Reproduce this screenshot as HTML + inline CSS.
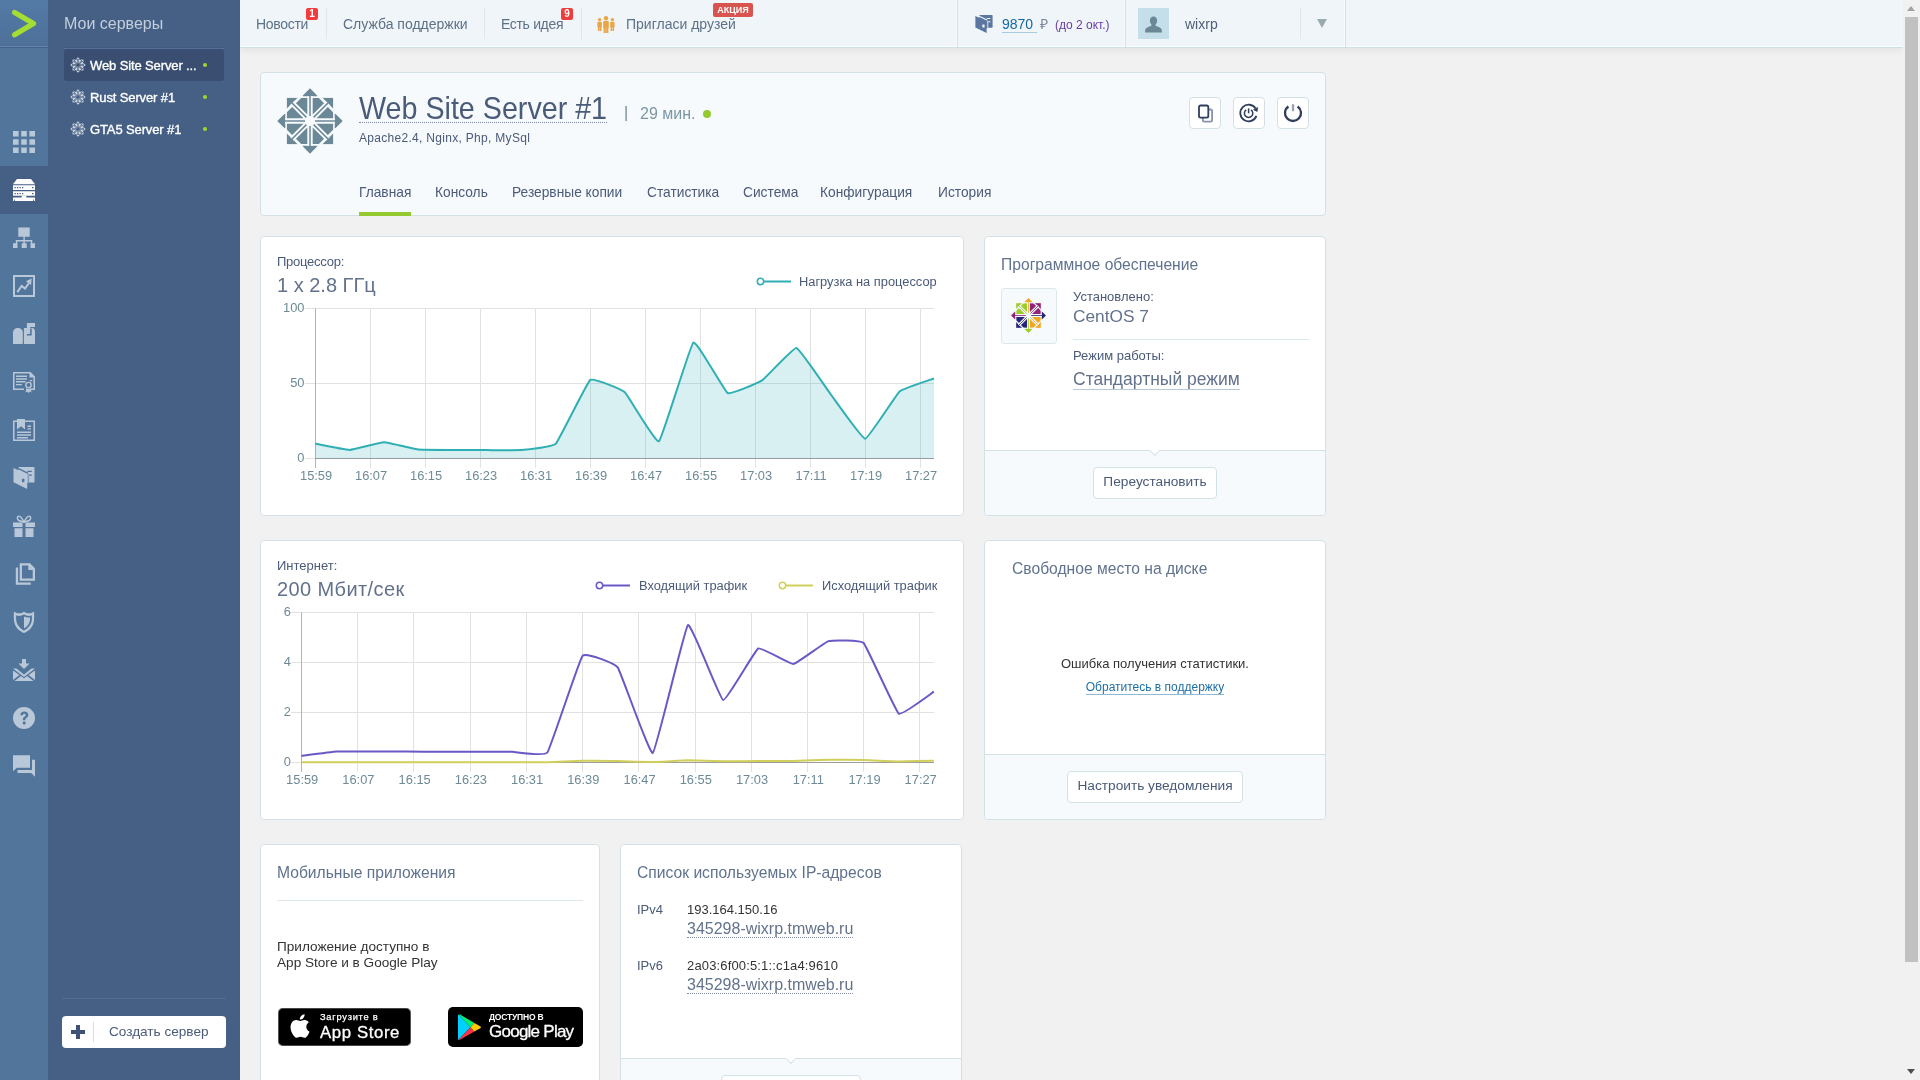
<!DOCTYPE html>
<html lang="ru">
<head>
<meta charset="utf-8">
<title>Web Site Server #1</title>
<style>
*{box-sizing:border-box;margin:0;padding:0}
html,body{width:1920px;height:1080px;overflow:hidden}
body{background:#f1f1f1;font-family:"Liberation Sans",sans-serif;font-size:13px;color:#4a5a78;position:relative;will-change:transform}
.abs{position:absolute}
.t{position:absolute;white-space:nowrap;line-height:1}
a{color:inherit;text-decoration:none}
/* top bar */
#topbar{position:absolute;left:240px;top:0;width:1663px;height:48px;background:#f0f5fa;border-bottom:1px solid #d0dfe5;box-shadow:inset 0 -1px 0 #fafdfe,0 2px 8px rgba(0,0,0,.07)}
.vsep{position:absolute;width:1px;background:#dde7ec;top:8px;height:31px}
.vsepf{position:absolute;width:1px;background:#d3e1e6;top:0;height:47px;box-shadow:-1px 0 0 #f9fcfe}
.nav{position:absolute;top:17px;font-size:14px;line-height:1;color:#5d7185;white-space:nowrap}
.badge{position:absolute;top:8px;width:12px;height:12px;border-radius:2px;background:#f23c3c;color:#fff;font-size:10px;font-weight:bold;line-height:12px;text-align:center}
/* sidebars */
#sb1{position:absolute;left:0;top:0;width:48px;height:1080px;background:#52759b}
#logo{position:absolute;left:0;top:0;width:48px;height:48px;background:linear-gradient(#537aa6,#4d7098);border-bottom:1px solid #44618a;box-shadow:inset 0 -1px 0 #6383ab}
.ic{position:absolute;left:0;width:48px;height:48px}
.ic svg{position:absolute;left:13px;top:13px;width:22px;height:22px;fill:#b9c8d9}
.ic.on{background:#455f85}
.ic.on svg{fill:#fff}
#sb2{position:absolute;left:48px;top:0;width:192px;height:1080px;background:#455f85}
.srv{position:absolute;left:16px;width:160px;height:32px;border-radius:3px;color:#fff;font-size:13px;-webkit-text-stroke:.35px #fff;line-height:32px;white-space:nowrap}
.srv.on{background:#394e70}
.srv span{position:absolute;left:26px;top:1px;letter-spacing:-.12px}
.srv i{position:absolute;left:139px;top:14px;width:4px;height:4px;border-radius:2px;background:#a2d42b}
.srv svg{position:absolute;left:6px;top:8px;width:16px;height:16px}
/* cards */
.card{position:absolute;background:#fff;border:1px solid #d3e1e6;border-radius:4px}
.foot{position:absolute;left:0;right:0;bottom:0;height:65px;background:#f7fafc;border-top:1px solid #d3e1e6;border-radius:0 0 3px 3px}
.notch{position:absolute;left:50%;top:-1px;width:7.500px;height:7.500px;margin-left:-3.750px;background:#fff;border-right:1px solid #d3e1e6;border-bottom:1px solid #d3e1e6;transform:translateY(-3.750px) rotate(45deg)}
.btn{position:absolute;height:32px;background:#fff;border:1px solid #d3e1e6;border-radius:4px;font-size:13.700px;line-height:28px;text-align:center;color:#4a5a78;white-space:nowrap}
.h{position:absolute;white-space:nowrap;line-height:1;font-size:15.650px;color:#60728e;margin-top:1px}
.lbl{position:absolute;white-space:nowrap;line-height:1;font-size:13px;color:#4a5a78}
.big{position:absolute;white-space:nowrap;line-height:1;font-size:20px;color:#63728c}
.tab{position:absolute;top:113px;font-size:13.750px;line-height:1;color:#4a5a78;white-space:nowrap}
svg text{font-family:"Liberation Sans",sans-serif}
</style>
</head>
<body>
<svg width="0" height="0" style="position:absolute">
<defs>
<mask id="cm" maskUnits="userSpaceOnUse" x="-34" y="-34" width="68" height="68">
<rect x="-34" y="-34" width="68" height="68" fill="#fff"/>
<g stroke="#000" fill="none">
<path d="M0-24.700V24.700M-24.700 0H24.700M-17.900-17.900 17.900 17.900M-17.900 17.900 17.900-17.900" stroke-width="5.400"/>
<path d="M-10-23.900H10M-10 23.900H10M-23.900-10V10M23.900-10V10" stroke-width="1.600"/>
<path d="M26 7.750 7.750 26M-26 7.750-7.750 26M26-7.750 7.750-26M-26-7.750-7.750-26" stroke-width="2.500"/>
</g>
<circle r="4.600" fill="#000"/>
<path d="M0-5V-26M0 5V26M-5 0H-26M5 0H26M3.600 3.600 19 19M-3.600 3.600-19 19M3.600-3.600 19-19M-3.600-3.600-19-19" stroke="#fff" stroke-width="1.500" fill="none"/>
</mask>
<g id="cent" fill="currentColor" mask="url(#cm)">
<rect x="-23.100" y="-23.100" width="46.200" height="46.200"/>
<path d="M0-32.700 9.600-23.100H-9.600zM0 32.700 9.600 23.100H-9.600zM-32.700 0-23.100 9.600V-9.600zM32.700 0 23.100 9.600V-9.600z"/>
</g>
</defs>
</svg>

<!-- ===== top bar ===== -->
<div id="topbar">
  <a class="nav" id="n1" style="left:16px;letter-spacing:-.3px">Новости</a>
  <span class="badge" style="left:66px">1</span>
  <div class="vsep" style="left:86px"></div>
  <a class="nav" id="n2" style="left:103px">Служба поддержки</a>
  <div class="vsep" style="left:244px"></div>
  <a class="nav" id="n3" style="left:261px;letter-spacing:-.33px">Есть идея</a>
  <span class="badge" style="left:321px">9</span>
  <div class="vsep" style="left:341px"></div>
  <svg class="abs" style="left:357px;top:16px" width="18" height="17" viewBox="0 0 18 17"><g fill="#eaa548"><circle cx="9" cy="2.2" r="2.2"/><rect x="6.2" y="5" width="5.6" height="7" rx="1"/><rect x="6.6" y="11" width="2.2" height="6"/><rect x="9.2" y="11" width="2.2" height="6"/><circle cx="2.6" cy="3.6" r="1.7"/><rect x="0.4" y="5.8" width="4.4" height="5.4" rx=".8"/><rect x="0.9" y="10.4" width="1.6" height="4.6"/><rect x="2.8" y="10.4" width="1.6" height="4.6"/><circle cx="15.4" cy="3.6" r="1.7"/><rect x="13.2" y="5.8" width="4.4" height="5.4" rx=".8"/><rect x="13.6" y="10.4" width="1.6" height="4.6"/><rect x="15.5" y="10.4" width="1.6" height="4.6"/></g></svg>
  <a class="nav" id="n4" style="left:386px">Пригласи друзей</a>
  <span class="abs" id="akc" style="left:473px;top:3px;width:40px;height:14px;border-radius:2px;background:#d9534f;color:#fff;font-size:9px;font-weight:bold;line-height:14px;text-align:center">АКЦИЯ</span>
  <div class="vsepf" style="left:717px"></div>
  <svg class="abs" style="left:734.500px;top:15px" width="18" height="18" viewBox="0 0 18 18"><rect x="4.300" y=".1" width="13.300" height="12.600" rx=".7" fill="#5b76a1"/><path d="M1.200-.3 12.400 5.200" stroke="#f0f5fa" stroke-width="1.100" fill="none"/><path d="M11.800 3.100h3.600v1h-3.600zM12.500 6.200h2.900v1h-2.900z" fill="#f0f5fa"/><path d="M11.800 6.200h1.600v6.500h-1.600z" fill="#b7c4d8"/><path fill-rule="evenodd" fill="#5b76a1" d="M.4.900 11.800 6.200 11.600 17.900.4 12.500z"/><rect x="7.300" y="9.600" width="2.300" height="2.900" rx=".5" fill="#f0f5fa"/></svg>
  <a class="nav" id="bal" style="left:762px;color:#1369a3;border-bottom:1px solid #a9cbe0;padding-bottom:1px">9870&nbsp;</a>
  <span class="nav" id="rub" style="left:800px;color:#7b8794">₽</span>
  <span class="nav" id="till" style="left:815px;top:19px;font-size:12px;color:#6a3ea1">(до 2 окт.)</span>
  <div class="vsepf" style="left:885px"></div>
  <div class="abs" style="left:898px;top:8px;width:31px;height:31px;background:#c4deea;overflow:hidden">
    <svg width="31" height="31" viewBox="0 0 31 31"><path fill="#6b8896" d="M15.5 8.5c2.3 0 3.6 1.7 3.6 4 0 1.6-.6 3-1.5 3.9v1.3c2.6.9 5.4 2.1 5.9 3.4.3.8.4 2.6.4 3.4H7.1c0-.8.1-2.6.4-3.4.5-1.3 3.3-2.5 5.9-3.4v-1.3c-.9-.9-1.5-2.3-1.5-3.9 0-2.3 1.300-4 3.600-4z"/></svg>
  </div>
  <span class="nav" id="usr" style="left:945px;color:#4f5f7a">wixrp</span>
  <div class="vsep" style="left:1060px"></div>
  <div class="abs" style="left:1077px;top:19px;width:0;height:0;border-left:5px solid transparent;border-right:5px solid transparent;border-top:9px solid #9aabb0"></div>
  <div class="vsepf" style="left:1105px"></div>
</div>

<!-- ===== scrollbar ===== -->
<div class="abs" style="left:1903px;top:0;width:17px;height:1080px;background:#f1f1f1">
  <div class="abs" style="left:2px;top:17px;width:13px;height:945px;background:#c1c1c1"></div>
  <div class="abs" style="left:4px;top:6px;width:0;height:0;border-left:4.5px solid transparent;border-right:4.5px solid transparent;border-bottom:5px solid #a3a3a3"></div>
  <div class="abs" style="left:4px;top:1069px;width:0;height:0;border-left:4.5px solid transparent;border-right:4.5px solid transparent;border-top:5px solid #505050"></div>
</div>

<!-- ===== sidebar 1 ===== -->
<div id="sb1">
  <div id="logo"><svg class="abs" style="left:12px;top:9px" width="25" height="30" viewBox="0 0 25 30"><path d="M2.6 3.4 21.5 14.6 2.6 25.8" fill="none" stroke="#a4de33" stroke-width="5.2" stroke-linecap="round" stroke-linejoin="round"/></svg></div>
  <div class="ic" style="top:118px"><svg viewBox="0 0 22 22"><path d="M0 0h5.6v5.6H0zM8.2 0h5.6v5.6H8.2zM16.4 0H22v5.6h-5.6zM0 8.2h5.6v5.6H0zM8.2 8.2h5.6v5.6H8.2zM16.4 8.2H22v5.6h-5.600zM0 16.400h5.600V22H0zM8.200 16.400h5.600V22H8.200zM16.400 16.400H22V22h-5.600z"/></svg></div>
  <div class="ic on" style="top:166px"><svg viewBox="0 0 22 22"><path d="M4 0h14l4 5.200H0z"/><path fill-rule="evenodd" d="M0 6.300h22v4.600H0zM1.500 8h1.300v1.300H1.500zM4 8h1.300v1.300H4zM6.500 8h1.300v1.300H6.500zM9 8h1.300v1.300H9zM19 8h1.500v1.300H19zM0 12.200h22v4.600H0zM1.500 13.900h1.300v1.300H1.500zM4 13.900h1.300v1.300H4zM6.500 13.900h1.300v1.300H6.500zM9 13.900h1.300v1.300H9zM19 13.900h1.500v1.300H19z"/><path d="M8.700 16.800h4.600v1.700h8.700V22h-1v-1.600h-.8V22H1.800v-1.600H1V22H0v-3.500h8.700z"/></svg></div>
  <div class="ic" style="top:214px"><svg viewBox="0 0 22 22"><path d="M5.300.5h11.400v9.200h-4.900v3.300h7.500v3.300H22V21h-4.500v-4.700h.4v-1.700h-6.100v1.700h1.900V21H8.700v-4.700h1.700v-1.700H4.300v1.700h.2V21H0v-4.700h2.800V13h7.600V9.700H5.300z"/></svg></div>
  <div class="ic" style="top:262px"><svg viewBox="0 0 22 22"><path fill-rule="evenodd" d="M0 0h22v22H0zM2 2v18h18V2z"/><path d="M4.300 17.200 8.700 10.900 12 13.500 16 8" fill="none" stroke="#b9c8d9" stroke-width="2.100"/><path d="M18.600 3.600 12.900 6.200 18.100 10z"/></svg></div>
  <div class="ic" style="top:310px"><svg viewBox="0 0 22 22"><path d="M0 10C0 7 2.100 5.100 4.900 5.100S9.800 7 9.800 10v10.300q0 .8-.8.800H.8q-.8 0-.8-.8z"/><path d="M10.900 5.100h3V0H22v4h-4.800v1.100H19q3 0 3 3.900v11.300q0 .8-.8.800h-9.500q-.8 0-.8-.8z"/><path d="M17.900 5.600v6.100h-4" fill="none" stroke="#52759b" stroke-width="1.600"/></svg></div>
  <div class="ic" style="top:358px"><svg viewBox="0 0 22 22"><path fill-rule="evenodd" d="M0 1h17.500L22 5.500V19h-5v-1.500h3.500V6.500h-4v-4h-15v15h9.500V19H0z"/><path d="M3 4.500h11v1.400H3zM3 7.300h11v1.400H3zM3 10.100h9.500v1.400H3zM3 12.900h6v1.400H3zM16.800 9h2.500v1.200h-2.500z"/><path fill-rule="evenodd" d="M15.500 10.700a3.400 3.400 0 1 1 0 6.800 3.400 3.400 0 0 1 0-6.800zm0 1.400a2 2 0 1 0 0 4 2 2 0 0 0 0-4z"/><path d="M13.300 17.200l-.8 4.300 1.600-1 1.400 1.500 1.400-1.500 1.600 1-.8-4.300-1 .7h-2.400z"/></svg></div>
  <div class="ic" style="top:406px"><svg viewBox="0 0 22 22"><path fill-rule="evenodd" d="M0 1.500h4V0h8v1.500h10V22H0zM1.500 3v17.500h19V3H12v7.500l-4-3.300-4 3.300V3z"/><path d="M4 12.500h14v1.500H4zM4 15.200h14v1.500H4zM4 17.900h11v1.500H4zM14.500 6.500h3.500v1.400h-3.500zM14.500 9.200h3.500v1.400h-3.500z"/></svg></div>
  <div class="ic" style="top:454px"><svg viewBox="0 0 18 18"><rect x="4.300" y=".1" width="13.300" height="12.600" rx=".7"/><path d="M1.200-.3 12.400 5.200" stroke="#52759b" stroke-width="1.100" fill="none"/><path d="M11.800 3.100h3.600v1h-3.600zM12.500 6.200h2.900v1h-2.900z" fill="#52759b"/><path d="M11.800 6.200h1.400v6.500h-1.400z" fill="#7f9ab8"/><path d="M.4.900 11.800 6.200 11.600 17.900.4 12.500z"/><rect x="7.300" y="9.600" width="2" height="2.900" rx=".6" fill="#52759b"/></svg></div>
  <div class="ic" style="top:502px"><svg viewBox="0 0 22 22"><path d="M0 7.500h9.500V12H0zM12.500 7.500H22V12h-9.500zM1.500 13.300h8V22h-8zM12.500 13.300h8V22h-8z"/><path fill="none" stroke="#b9c8d9" stroke-width="1.500" d="M10.800 7C9.500 4 8 1 5.800 1.200 3.800 1.400 3.800 4.500 5.800 5.500 7.500 6.400 9.500 6.800 10.800 7zM11.200 7C12.500 4 14 1 16.200 1.200c2 .2 2 3.300 0 4.300C14.500 6.400 12.500 6.800 11.200 7z"/></svg></div>
  <div class="ic" style="top:550px"><svg viewBox="0 0 22 22"><path fill-rule="evenodd" d="M6.700.3H17L22 5.300v12.500H6.700zM9 2.600v12.900h10.700V7h-4.400V2.600z"/><path d="M2.800 4.500h2.300v14.900h12.700v2.300H2.800z"/></svg></div>
  <div class="ic" style="top:598px"><svg viewBox="0 0 22 22"><path fill-rule="evenodd" d="M1 .5C3.500 2.800 7.500 3 11 .8c3.500 2.200 7.500 2 10-.3 0 0 .5 4.500 0 9C20.300 16 16 20 11 22 6 20 1.700 16 1 9.500.5 5 1 .5 1 .5zM3.200 4.300c-.2 1.700-.2 3.500 0 5C3.800 14 7 17.500 11 19.500c4-2 7.200-5.500 7.800-10.200.2-1.500.2-3.300 0-5C16.500 5.500 13.500 5 11 3.500 8.500 5 5.500 5.500 3.200 4.300z"/><path d="M11 5.500c2 1 4 1.300 6 .8 0 1 0 2.200-.1 3.200-.5 3.500-2.900 6.300-5.900 8z"/></svg></div>
  <div class="ic" style="top:646px"><svg viewBox="0 0 22 22"><path d="M9 0h4v4.500h3.500L11 10 5.500 4.500H9z"/><path d="M0 9.500 3.500 9.500 11 15.500 18.500 9.500H22L11 18z"/><path d="M0 11.500 6.500 16 0 21zM22 11.500 15.500 16 22 21zM1.500 22 8 17l3 2.300 3-2.300 6.500 5z"/></svg></div>
  <div class="ic" style="top:694px"><svg viewBox="0 0 22 22"><path fill-rule="evenodd" d="M11 0a11 11 0 1 1 0 22 11 11 0 0 1 0-22zM7.300 8.200h2.500c.1-1 .7-1.500 1.500-1.500.9 0 1.400.5 1.400 1.200 0 .8-.5 1.200-1.300 1.800-1 .8-1.500 1.500-1.500 3v.5h2.400v-.4c0-.8.400-1.200 1.200-1.800 1-.8 1.800-1.600 1.800-3.200 0-2-1.600-3.300-3.900-3.300-2.500 0-4 1.400-4.100 3.700zM11.200 14.600c-.9 0-1.600.7-1.600 1.500 0 .9.700 1.500 1.600 1.500s1.600-.6 1.600-1.500c0-.8-.7-1.500-1.600-1.500z"/></svg></div>
  <div class="ic" style="top:742px"><svg viewBox="0 0 22 22"><path d="M0 .2h17v12.500H3.800L0 16.300z"/><path d="M19 4.700h3v17l-3.800-3.700H4.500v-3H19z"/></svg></div>
</div>

<!-- ===== sidebar 2 ===== -->
<div id="sb2">
  <div class="t" id="mys" style="left:16px;top:16px;font-size:16px;color:#c3cfdc">Мои серверы</div>
  <div class="abs" style="left:16px;top:47px;width:160px;height:1px;background:#3f5a80"></div><div class="abs" style="left:16px;top:48px;width:160px;height:1px;background:#56709a"></div>
  <div class="srv on" style="top:49px"><svg viewBox="-34 -34 68 68"><use href="#cent" color="#c9d3df"/></svg><span id="s1">Web Site Server ...</span><i></i></div>
  <div class="srv" style="top:81px"><svg viewBox="-34 -34 68 68"><use href="#cent" color="#c9d3df"/></svg><span id="s2">Rust Server #1</span><i></i></div>
  <div class="srv" style="top:113px"><svg viewBox="-34 -34 68 68"><use href="#cent" color="#c9d3df"/></svg><span id="s3">GTA5 Server #1</span><i></i></div>
  <div class="abs" style="left:14px;top:998px;width:164px;height:1px;background:#526b90"></div>
  <div class="abs" style="left:14px;top:1016px;width:164px;height:32px;background:#fff;border-radius:4px">
    <div class="abs" style="left:9px;top:14px;width:14px;height:4px;background:#3d5274"></div>
    <div class="abs" style="left:14px;top:9px;width:4px;height:14px;background:#3d5274"></div>
    <div class="abs" style="left:31px;top:6px;width:1px;height:20px;background:#d3e1e6"></div>
    <span class="t" id="crt" style="left:47px;top:9px;font-size:13.600px;color:#4a5a78">Создать сервер</span>
  </div>
</div>

<!-- ===== header card ===== -->
<div class="card" style="left:260px;top:72px;width:1066px;height:144px;background:#f7fafc">
  <svg class="abs" style="left:15.500px;top:15px" width="66" height="66" viewBox="-33 -33 66 66"><use href="#cent" color="#6b8896"/></svg>
  <div class="t" id="ttl" style="left:98px;top:20px;font-size:30.500px;transform-origin:0 0;transform:scaleX(.94);color:#4a5b79">Web Site Server #1</div>
  <div class="abs" style="left:98px;top:49px;width:248px;height:0;border-top:1px dotted #7d8ba3"></div>
  <div class="t" id="bar" style="left:363px;top:32px;font-size:16px;color:#6d8a96">|</div>
  <div class="t" id="upt" style="left:379px;top:33px;font-size:16px;color:#7b97a3">29 мин.</div>
  <div class="abs" style="left:442px;top:37px;width:8px;height:8px;border-radius:4px;background:#94c92f"></div>
  <div class="t" id="sub" style="left:98px;top:59px;font-size:12px;letter-spacing:.3px;color:#4a5a78">Apache2.4, Nginx, Php, MySql</div>
  <a class="tab" id="t1" style="left:98px">Главная</a>
  <a class="tab" id="t2" style="left:174px">Консоль</a>
  <a class="tab" id="t3" style="left:251px">Резервные копии</a>
  <a class="tab" id="t4" style="left:386px">Статистика</a>
  <a class="tab" id="t5" style="left:482px">Система</a>
  <a class="tab" id="t6" style="left:559px">Конфигурация</a>
  <a class="tab" id="t7" style="left:677px">История</a>
  <div class="abs" style="left:98px;top:139px;width:52px;height:4px;background:#94c92f"></div>
  <div class="btn" style="left:928px;top:24px;width:32px"><svg class="abs" style="left:0;top:0" width="30" height="30" viewBox="0 0 30 30"><rect x="12.800" y="11.500" width="9.300" height="12.200" rx="1.600" fill="none" stroke="#8b93a8" stroke-width="1.800"/><rect x="9" y="7.500" width="9.300" height="12.200" rx="1.600" fill="#fff" stroke="#2f3f5c" stroke-width="1.800"/></svg></div>
  <div class="btn" style="left:972px;top:24px;width:32px"><svg class="abs" style="left:0;top:0" width="30" height="30" viewBox="0 0 30 30"><path d="M22.40 17.84A8.3 8.3 0 1 1 21.64 10.60" fill="none" stroke="#2f3f5c" stroke-width="1.800"/><path d="M23.42 14.06 24.10 9.00 18.93 11.63z" fill="#2f3f5c"/><path d="M17.01 11.86A4.200 4.200 0 1 1 12.19 11.86" fill="none" stroke="#2f3f5c" stroke-width="1.500"/><path d="M14.600 10.400v4.900" stroke="#2f3f5c" stroke-width="1.500"/></svg></div>
  <div class="btn" style="left:1016px;top:24px;width:32px"><svg class="abs" style="left:0;top:0" width="30" height="30" viewBox="0 0 30 30"><path d="M19.59 8.45A8 8 0 1 1 10.41 8.45" fill="none" stroke="#2f3f5c" stroke-width="2.300"/><path d="M15 6.200v7" stroke="#9a9fb2" stroke-width="2.300"/></svg></div>
</div>

<!-- ===== CPU card ===== -->
<div class="card" style="left:260px;top:236px;width:704px;height:280px">
  <div class="lbl" id="c1" style="left:16px;top:18px;letter-spacing:-.25px">Процессор:</div>
  <div class="big" id="c2" style="left:16px;top:38px">1 x 2.8 ГГц</div>
  <!--CPUCHART-->

<svg class="abs" style="left:0;top:0" width="702" height="278" viewBox="0 0 702 278">
<path d="M54.5 71.5V230.9M109.5 71.5V230.9M164.5 71.5V230.9M219.5 71.5V230.9M274.5 71.5V230.9M329.5 71.5V230.9M384.5 71.5V230.9M439.5 71.5V230.9M494.5 71.5V230.9M549.5 71.5V230.9M604.5 71.5V230.9M659.5 71.5V230.9M43.8 71.5H673.0M43.8 146.5H673.0M43.8 221.5H673.0" stroke="#e2e2e2" stroke-width="1" fill="none"/>
<path d="M54.5 71.5V230.9" stroke="#b3b3b3" stroke-width="1" fill="none"/>
<path d="M54.5 221.5H673.0" stroke="#9c9c9c" stroke-width="1" fill="none"/>
<path d="M54.3 206.6C55.8 206.9 85.6 213.0 88.7 212.9C91.8 212.8 119.9 205.3 123.0 205.3C126.1 205.3 154.3 212.2 157.4 212.5C160.5 212.8 188.7 212.9 191.8 212.9C194.9 212.9 223.1 213.1 226.1 213.1C229.2 213.1 257.4 213.4 260.5 213.1C263.6 212.8 291.8 209.8 294.9 206.6C298.0 203.4 326.2 145.2 329.3 142.9C332.4 140.6 360.5 152.3 363.6 155.1C366.7 157.9 394.9 206.5 398.0 204.3C401.1 202.1 429.3 107.7 432.4 105.5C435.5 103.3 463.6 154.4 466.7 156.1C469.8 157.8 498.0 145.4 501.1 143.4C504.2 141.4 532.4 110.4 535.5 111.0C538.6 111.6 566.8 153.4 569.8 157.5C572.9 161.6 601.1 201.9 604.2 201.8C607.3 201.7 635.5 157.2 638.6 154.5C641.7 151.8 671.4 142.1 673.0 141.5L673.0 221.4L54.3 221.4Z" fill="rgba(46,175,179,.19)"/>
<path d="M54.3 206.6C55.8 206.9 85.6 213.0 88.7 212.9C91.8 212.8 119.9 205.3 123.0 205.3C126.1 205.3 154.3 212.2 157.4 212.5C160.5 212.8 188.7 212.9 191.8 212.9C194.9 212.9 223.1 213.1 226.1 213.1C229.2 213.1 257.4 213.4 260.5 213.1C263.6 212.8 291.8 209.8 294.9 206.6C298.0 203.4 326.2 145.2 329.3 142.9C332.4 140.6 360.5 152.3 363.6 155.1C366.7 157.9 394.9 206.5 398.0 204.3C401.1 202.1 429.3 107.7 432.4 105.5C435.5 103.3 463.6 154.4 466.7 156.1C469.8 157.8 498.0 145.4 501.1 143.4C504.2 141.4 532.4 110.4 535.5 111.0C538.6 111.6 566.8 153.4 569.8 157.5C572.9 161.6 601.1 201.9 604.2 201.8C607.3 201.7 635.5 157.2 638.6 154.5C641.7 151.8 671.4 142.1 673.0 141.5" fill="none" stroke="#2eafb3" stroke-width="2" stroke-linejoin="round"/>
<g font-size="12.850" fill="#6d8a96">
<text x="43.5" y="75.2" text-anchor="end">100</text>
<text x="43.5" y="150.1" text-anchor="end">50</text>
<text x="43.5" y="225.1" text-anchor="end">0</text>
<text x="55.1" y="243.4" text-anchor="middle">15:59</text>
<text x="110.1" y="243.4" text-anchor="middle">16:07</text>
<text x="165.1" y="243.4" text-anchor="middle">16:15</text>
<text x="220.1" y="243.4" text-anchor="middle">16:23</text>
<text x="275.1" y="243.4" text-anchor="middle">16:31</text>
<text x="330.1" y="243.4" text-anchor="middle">16:39</text>
<text x="385.1" y="243.4" text-anchor="middle">16:47</text>
<text x="440.1" y="243.4" text-anchor="middle">16:55</text>
<text x="495.1" y="243.4" text-anchor="middle">17:03</text>
<text x="550.1" y="243.4" text-anchor="middle">17:11</text>
<text x="605.1" y="243.4" text-anchor="middle">17:19</text>
<text x="660.1" y="243.4" text-anchor="middle">17:27</text>
</g>
<path d="M500 44.500H530" stroke="#2eafb3" stroke-width="2"/><circle cx="499.500" cy="44.500" r="3.200" fill="#fff" stroke="#2eafb3" stroke-width="1.500"/><text id="lg1" x="538" y="49" font-size="12.850" fill="#4a5a78">Нагрузка на процессор</text>
</svg>
<!--/CPUCHART-->
</div>

<!-- ===== software card ===== -->
<div class="card" style="left:984px;top:236px;width:342px;height:280px">
  <div class="h" id="h1" style="left:16px;top:19px">Программное обеспечение</div>
  <div class="abs" style="left:16px;top:51px;width:56px;height:56px;border:1px solid #dde8ed;border-radius:3px;background:#f7fafc">
    <!--CENTCOLOR-->
    <svg class="abs" style="left:8.200px;top:8px" width="37" height="37" viewBox="-34.700 -34.700 69.400 69.400"><g mask="url(#cm)">
      <rect x="-23.100" y="-23.100" width="23.100" height="23.100" fill="#9ccd2a"/><rect x="0" y="-23.100" width="23.100" height="23.100" fill="#932279"/><rect x="0" y="0" width="23.100" height="23.100" fill="#efa724"/><rect x="-23.100" y="0" width="23.100" height="23.100" fill="#262577"/>
      <path d="M0-32.700 8.500-24.200H-8.500z" fill="#efa724"/><path d="M0 32.700 8.500 24.200H-8.500z" fill="#9ccd2a"/><path d="M-32.700 0-24.200 8.500V-8.500z" fill="#932279"/><path d="M32.700 0 24.200 8.500V-8.500z" fill="#262577"/>
      <path d="M0-4V-26" stroke="#efa724" stroke-width="3"/><path d="M0 4V26" stroke="#9ccd2a" stroke-width="3"/><path d="M-4 0H-26" stroke="#932279" stroke-width="3"/><path d="M4 0H26" stroke="#262577" stroke-width="3"/>
    </g></svg>
    <!--/CENTCOLOR-->
  </div>
  <div class="lbl" id="w1" style="left:88px;top:53px">Установлено:</div>
  <div class="t" id="w2" style="left:88px;top:71px;font-size:17.300px;color:#63728c">CentOS 7</div>
  <div class="abs" style="left:88px;top:102px;width:236px;height:1px;background:#dde8ed"></div>
  <div class="lbl" id="w3" style="left:88px;top:112px">Режим работы:</div>
  <div class="t" id="w4" style="left:88px;top:134px;font-size:17.500px;color:#63728c;padding-bottom:0;border-bottom:1px solid #b9c9d6">Стандартный режим</div>
  <div class="foot"><div class="notch"></div><div class="btn" id="b1" style="left:108px;top:16px;width:124px">Переустановить</div></div>
</div>

<!-- ===== network card ===== -->
<div class="card" style="left:260px;top:540px;width:704px;height:280px">
  <div class="lbl" id="i1" style="left:16px;top:18px">Интернет:</div>
  <div class="big" id="i2" style="left:16px;top:38px;letter-spacing:.4px">200 Мбит/сек</div>
  <!--NETCHART-->
<svg class="abs" style="left:0;top:0" width="702" height="278" viewBox="0 0 702 278">
<path d="M40.5 71.5V230.9M96.5 71.5V230.9M152.5 71.5V230.9M209.5 71.5V230.9M265.5 71.5V230.9M321.5 71.5V230.9M377.5 71.5V230.9M434.5 71.5V230.9M490.5 71.5V230.9M546.5 71.5V230.9M602.5 71.5V230.9M658.5 71.5V230.9M29.9 71.5H673.0M29.9 121.5H673.0M29.9 171.5H673.0M29.9 221.5H673.0" stroke="#e2e2e2" stroke-width="1" fill="none"/>
<path d="M40.5 71.5V230.9" stroke="#b3b3b3" stroke-width="1" fill="none"/>
<path d="M40.5 221.5H673.0" stroke="#9c9c9c" stroke-width="1" fill="none"/>
<path d="M40.4 215.0C42.0 214.8 72.4 210.8 75.5 210.6C78.7 210.4 107.5 210.6 110.7 210.6C113.8 210.6 142.7 210.6 145.8 210.6C149.0 210.6 177.8 210.8 181.0 210.8C184.1 210.8 212.9 210.8 216.1 210.8C219.3 210.8 248.1 210.8 251.2 210.8C254.4 210.8 283.2 215.8 286.4 211.5C289.5 207.2 318.4 118.7 321.5 114.9C324.7 111.1 353.5 122.0 356.7 126.4C359.8 130.8 388.6 213.8 391.8 211.9C395.0 210.0 423.8 86.5 426.9 84.1C430.1 81.7 458.9 157.9 462.1 159.0C465.2 160.1 494.1 109.1 497.2 107.5C500.4 105.9 529.2 123.3 532.4 123.0C535.5 122.7 564.3 101.0 567.5 100.1C570.7 99.2 599.5 98.7 602.6 102.0C605.8 105.3 634.6 170.4 637.8 172.6C640.9 174.8 671.3 151.7 672.9 150.7" fill="none" stroke="#6a58c6" stroke-width="2" stroke-linejoin="round"/>
<path d="M40.4 221.3C42.0 221.3 72.4 221.3 75.5 221.3C78.7 221.3 107.5 221.3 110.7 221.3C113.8 221.3 142.7 221.3 145.8 221.3C149.0 221.3 177.8 221.3 181.0 221.3C184.1 221.3 212.9 221.3 216.1 221.3C219.3 221.3 248.1 221.3 251.2 221.3C254.4 221.3 283.2 221.4 286.4 221.3C289.5 221.2 318.4 219.9 321.5 219.8C324.7 219.7 353.5 220.0 356.7 220.1C359.8 220.2 388.6 221.1 391.8 221.1C395.0 221.1 423.8 219.3 426.9 219.3C430.1 219.3 458.9 220.3 462.1 220.3C465.2 220.3 494.1 220.0 497.2 220.0C500.4 220.0 529.2 220.1 532.4 220.0C535.5 219.9 564.3 218.8 567.5 218.8C570.7 218.8 599.5 218.9 602.6 219.0C605.8 219.1 634.6 220.4 637.8 220.4C640.9 220.4 671.3 219.7 672.9 219.7" fill="none" stroke="#d1cf5b" stroke-width="2" stroke-linejoin="round"/>
<g font-size="12.850" fill="#6d8a96">
<text x="30.0" y="75.2" text-anchor="end">6</text>
<text x="30.0" y="125.2" text-anchor="end">4</text>
<text x="30.0" y="175.1" text-anchor="end">2</text>
<text x="30.0" y="225.1" text-anchor="end">0</text>
<text x="41.2" y="243.4" text-anchor="middle">15:59</text>
<text x="97.4" y="243.4" text-anchor="middle">16:07</text>
<text x="153.7" y="243.4" text-anchor="middle">16:15</text>
<text x="209.9" y="243.4" text-anchor="middle">16:23</text>
<text x="266.1" y="243.4" text-anchor="middle">16:31</text>
<text x="322.3" y="243.4" text-anchor="middle">16:39</text>
<text x="378.6" y="243.4" text-anchor="middle">16:47</text>
<text x="434.8" y="243.4" text-anchor="middle">16:55</text>
<text x="491.0" y="243.4" text-anchor="middle">17:03</text>
<text x="547.3" y="243.4" text-anchor="middle">17:11</text>
<text x="603.5" y="243.4" text-anchor="middle">17:19</text>
<text x="659.7" y="243.4" text-anchor="middle">17:27</text>
</g>
<path d="M339 44.500H369" stroke="#6a58c6" stroke-width="2"/><circle cx="338.500" cy="44.500" r="3.200" fill="#fff" stroke="#6a58c6" stroke-width="1.500"/><text id="lg2" x="378" y="49" font-size="12.850" fill="#4a5a78">Входящий трафик</text><path d="M522 44.500H552" stroke="#d1cf5b" stroke-width="2"/><circle cx="521.500" cy="44.500" r="3.200" fill="#fff" stroke="#d1cf5b" stroke-width="1.500"/><text id="lg3" x="561" y="49" font-size="12.850" fill="#4a5a78">Исходящий трафик</text>
</svg>
<!--/NETCHART-->
</div>

<!-- ===== disk card ===== -->
<div class="card" style="left:984px;top:540px;width:342px;height:280px">
  <div class="h" id="h2" style="left:27px;top:19px">Свободное место на диске</div>
  <div class="t" id="d1" style="left:0;width:340px;text-align:center;top:116px;font-size:13px;color:#333">Ошибка получения статистики.</div>
  <div class="t" id="d2w" style="left:0;width:340px;text-align:center;top:140px;font-size:12px;color:#1d6fa5"><span id="d2" style="display:inline-block;line-height:13px;height:14px;box-sizing:border-box;border-bottom:1px solid #8fbad6">Обратитесь в поддержку</span></div>
  <div class="foot"><div class="btn" id="b2" style="left:82px;top:16px;width:176px">Настроить уведомления</div></div>
</div>

<!-- ===== mobile card ===== -->
<div class="card" style="left:260px;top:844px;width:340px;height:260px">
  <div class="h" id="h3" style="left:16px;top:19px">Мобильные приложения</div>
  <div class="abs" style="left:16px;top:55px;width:306px;height:1px;background:#dde8ed"></div>
  <div class="t" id="m1" style="left:16px;top:94px;font-size:13.600px;line-height:16px;color:#333;white-space:pre">Приложение доступно в
App Store и в Google Play</div>
  <!--BADGES-->
  <div class="abs" style="left:16.800px;top:162.600px;width:133.400px;height:38.500px;background:#000;box-shadow:inset 0 0 0 .6px #8a8a8a;border-radius:5px;overflow:hidden">
    <svg class="abs" style="left:11.700px;top:5.300px" width="21.300" height="26" viewBox="0 0 23 28"><path fill="#fff" d="M18.700 14.800c0-3.200 2.600-4.700 2.700-4.800-1.500-2.200-3.800-2.500-4.600-2.500-1.900-.2-3.800 1.200-4.800 1.200s-2.500-1.100-4.100-1.100c-2.100 0-4.100 1.300-5.200 3.200-2.200 3.900-.6 9.600 1.600 12.700 1.100 1.500 2.300 3.300 4 3.200 1.600-.1 2.200-1 4.100-1s2.500 1 4.200 1c1.700 0 2.800-1.500 3.900-3.100 1.200-1.800 1.700-3.500 1.700-3.600-.1 0-3.500-1.300-3.500-5.200zM15.500 5.300c.9-1.100 1.500-2.600 1.300-4.100-1.300.1-2.900.9-3.800 2-.8.900-1.500 2.500-1.300 3.900 1.400.1 2.900-.7 3.800-1.800z"/></svg>
    <span class="t" id="as1" style="left:42.200px;top:5.400px;font-size:9.300px;letter-spacing:.75px;color:#fff;-webkit-text-stroke:.25px #fff">Загрузите в</span>
    <span class="t" id="as2" style="left:42.200px;top:17.400px;font-size:16.800px;letter-spacing:.6px;color:#fff;-webkit-text-stroke:.3px #fff">App Store</span>
  </div>
  <div class="abs" style="left:187px;top:162px;width:135px;height:40px;background:#000;border-radius:5px;overflow:hidden">
    <svg class="abs" style="left:9.500px;top:7px" width="24" height="27" viewBox="0 0 24 27"><path d="M.6.600 12.500 13.200.6 25.800C.2 25.600 0 25.100 0 24.400V2C0 1.300.2.800.6.600z" fill="#00d0ff"/><path d="M.6.600C1.100.3 1.700.4 2.400.8L16.400 8.900 12.500 13.200z" fill="#00f076"/><path d="M.6 25.800c.5.300 1.100.2 1.800-.2l14-8.100-3.900-4.300z" fill="#f93647"/><path d="M16.400 8.900 22.100 12.200c1.200.7 1.200 1.300 0 2L16.400 17.500 12.500 13.200z" fill="#ffc900"/></svg>
    <span class="t" id="gp1" style="left:41px;top:6px;font-size:8.500px;font-weight:bold;letter-spacing:-.2px;color:#fff">ДОСТУПНО В</span>
    <span class="t" id="gp2" style="left:41px;top:16px;font-size:17px;letter-spacing:-.75px;color:#fff;-webkit-text-stroke:.3px #fff">Google Play</span>
  </div>
<!--/BADGES-->
</div>

<!-- ===== IP card ===== -->
<div class="card" style="left:620px;top:844px;width:342px;height:260px">
  <div class="h" id="h4" style="left:16px;top:19px">Список используемых IP-адресов</div>
  <div class="lbl" id="p1" style="left:16px;top:58px">IPv4</div>
  <div class="lbl" id="p2" style="left:66px;top:58px;color:#333">193.164.150.16</div>
  <div class="t" id="p3" style="left:66px;top:76px;font-size:16px;color:#63728c;padding-bottom:0;border-bottom:1px dotted #7d8ba3">345298-wixrp.tmweb.ru</div>
  <div class="lbl" id="p4" style="left:16px;top:114px">IPv6</div>
  <div class="lbl" id="p5" style="left:66px;top:114px;letter-spacing:.15px;color:#333">2a03:6f00:5:1::c1a4:9610</div>
  <div class="t" id="p6" style="left:66px;top:132px;font-size:16px;color:#63728c;padding-bottom:0;border-bottom:1px dotted #7d8ba3">345298-wixrp.tmweb.ru</div>
  <div class="foot" style="top:213px;bottom:auto;height:60px"><div class="notch"></div><div class="btn" style="left:100px;top:16px;width:140px"></div></div>
</div>

</body>
</html>
